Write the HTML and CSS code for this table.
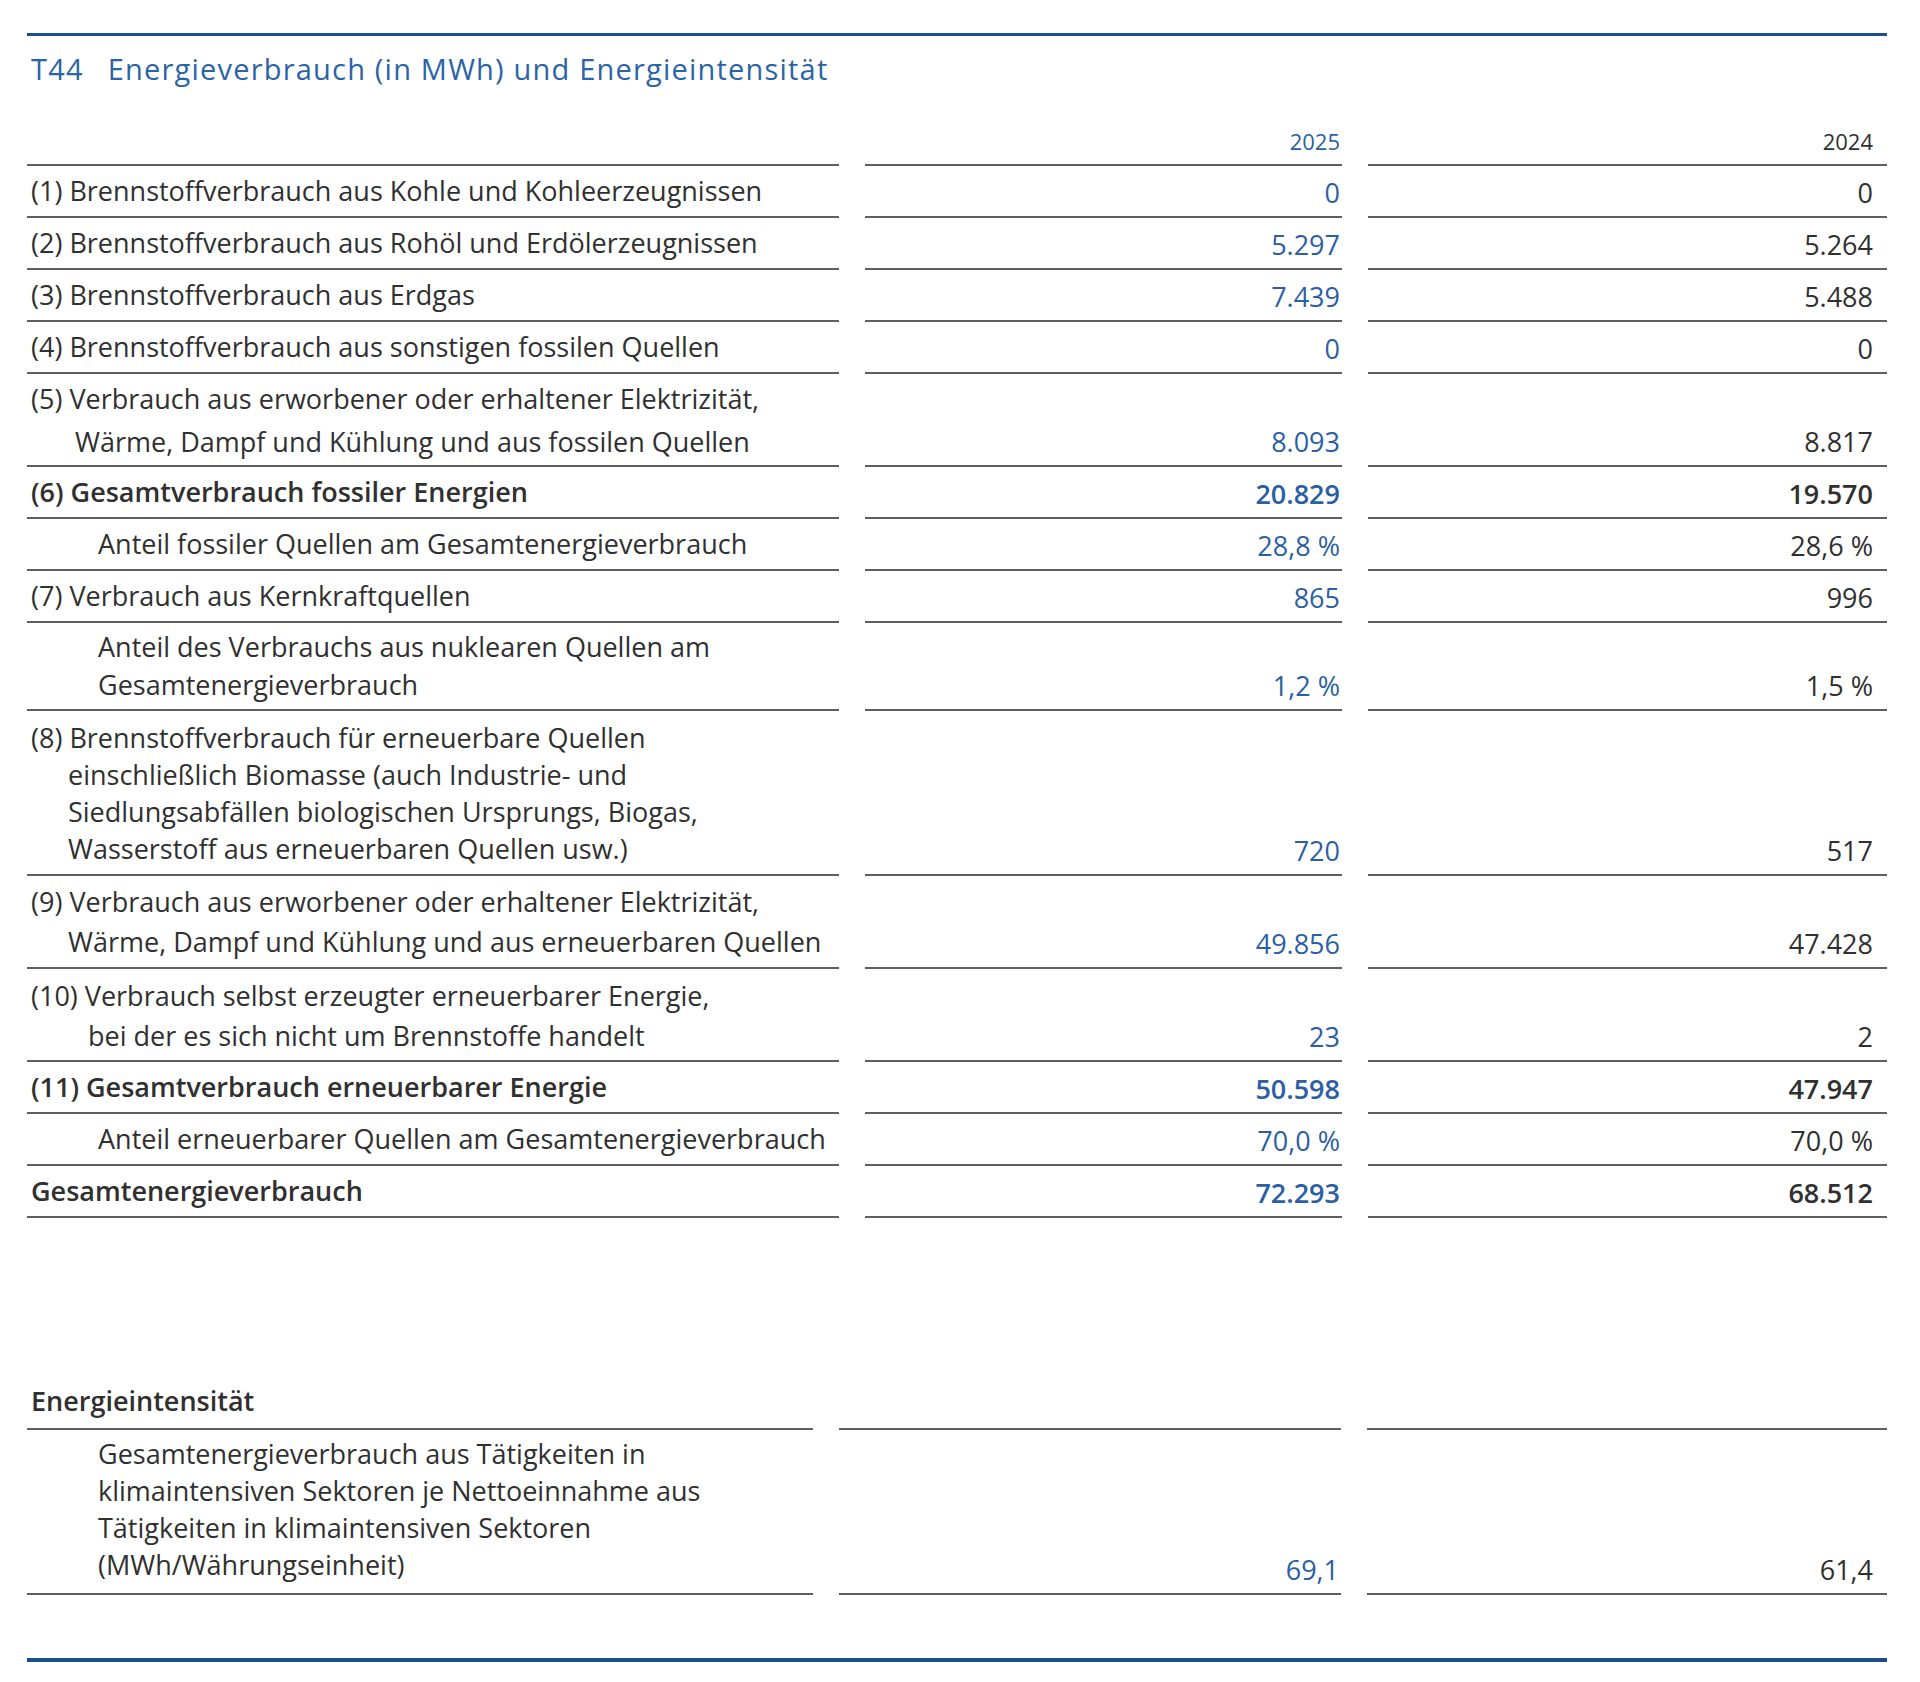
FILE: index.html
```html
<!DOCTYPE html>
<html lang="de">
<head>
<meta charset="utf-8">
<title>T44 Energieverbrauch</title>
<link rel="stylesheet" href="styles.css">
</head>
<body>
<div class="page">
  <div class="rule-top"></div>
  <h1 class="title"><span class="tnum">T44</span>Energieverbrauch (in MWh) und Energieintensität</h1>

  <div class="tbl">
    <div class="row head"><div class="lab"></div><div class="val c2">2025</div><div class="val c3">2024</div></div>
    <div class="row"><div class="lab">(1) Brennstoffverbrauch aus Kohle und Kohleerzeugnissen</div><div class="val c2">0</div><div class="val c3">0</div></div>
    <div class="row"><div class="lab">(2) Brennstoffverbrauch aus Rohöl und Erdölerzeugnissen</div><div class="val c2">5.297</div><div class="val c3">5.264</div></div>
    <div class="row"><div class="lab">(3) Brennstoffverbrauch aus Erdgas</div><div class="val c2">7.439</div><div class="val c3">5.488</div></div>
    <div class="row"><div class="lab">(4) Brennstoffverbrauch aus sonstigen fossilen Quellen</div><div class="val c2">0</div><div class="val c3">0</div></div>
    <div class="row"><div class="lab hang-a r5">(5) Verbrauch aus erworbener oder erhaltener Elektrizität,<br>Wärme, Dampf und Kühlung und aus fossilen Quellen</div><div class="val c2">8.093</div><div class="val c3">8.817</div></div>
    <div class="row strong"><div class="lab">(6) Gesamtverbrauch fossiler Energien</div><div class="val c2">20.829</div><div class="val c3">19.570</div></div>
    <div class="row"><div class="lab sub">Anteil fossiler Quellen am Gesamtenergieverbrauch</div><div class="val c2">28,8 %</div><div class="val c3">28,6 %</div></div>
    <div class="row"><div class="lab">(7) Verbrauch aus Kernkraftquellen</div><div class="val c2">865</div><div class="val c3">996</div></div>
    <div class="row"><div class="lab sub rn">Anteil des Verbrauchs aus nuklearen Quellen am<br>Gesamtenergieverbrauch</div><div class="val c2">1,2 %</div><div class="val c3">1,5 %</div></div>
    <div class="row"><div class="lab hang-b r8">(8) Brennstoffverbrauch für erneuerbare Quellen<br>einschließlich Biomasse (auch Industrie- und<br>Siedlungsabfällen biologischen Ursprungs, Biogas,<br>Wasserstoff aus erneuerbaren Quellen usw.)</div><div class="val c2">720</div><div class="val c3">517</div></div>
    <div class="row"><div class="lab hang-b r9">(9) Verbrauch aus erworbener oder erhaltener Elektrizität,<br>Wärme, Dampf und Kühlung und aus erneuerbaren Quellen</div><div class="val c2">49.856</div><div class="val c3">47.428</div></div>
    <div class="row"><div class="lab hang-c r10">(10) Verbrauch selbst erzeugter erneuerbarer Energie,<br>bei der es sich nicht um Brennstoffe handelt</div><div class="val c2">23</div><div class="val c3">2</div></div>
    <div class="row strong"><div class="lab">(11) Gesamtverbrauch erneuerbarer Energie</div><div class="val c2">50.598</div><div class="val c3">47.947</div></div>
    <div class="row"><div class="lab sub">Anteil erneuerbarer Quellen am Gesamtenergieverbrauch</div><div class="val c2">70,0 %</div><div class="val c3">70,0 %</div></div>
    <div class="row strong"><div class="lab">Gesamtenergieverbrauch</div><div class="val c2">72.293</div><div class="val c3">68.512</div></div>
  </div>

  <div class="tbl tbl2">
    <div class="row strong"><div class="lab ih">Energieintensität</div><div class="val c2"></div><div class="val c3"></div></div>
    <div class="row"><div class="lab sub ri">Gesamtenergieverbrauch aus Tätigkeiten in<br>klimaintensiven Sektoren je Nettoeinnahme aus<br>Tätigkeiten in klimaintensiven Sektoren<br>(MWh/Währungseinheit)</div><div class="val c2">69,1</div><div class="val c3">61,4</div></div>
  </div>

  <div class="rule-bottom"></div>
</div>
</body>
</html>
```

FILE: styles.css
```css
html, body {
  margin: 0;
  padding: 0;
  background: #ffffff;
}

body {
  font-family: "Open Sans", "Noto Sans", "Liberation Sans", sans-serif;
  color: #303030;
}

.page {
  width: 1860px;
  padding: 33px 0 0 27px;
}

.rule-top {
  border-top: 3px solid #1c4d8c;
}

.title {
  margin: 14px 0 0 0;
  font-weight: 400;
  font-size: 29px;
  line-height: 37px;
  letter-spacing: 1.2px;
  color: #2a64a6;
  padding-left: 4px;
}

.tnum {
  display: inline-block;
  margin-right: 24px;
}

.tbl {
  margin-top: 39px;
}

.row {
  display: grid;
  grid-template-columns: 812px 477px 519px;
  column-gap: 26px;
}

.row > div {
  border-bottom: 2px solid #5f5f5f;
}

.lab {
  font-size: 27px;
  line-height: 37px;
  padding: 6px 0 7px 4px;
}

.val {
  display: flex;
  justify-content: flex-end;
  align-items: flex-end;
  font-size: 27px;
  line-height: 30px;
  padding-bottom: 8px;
}

.c2 {
  color: #2b5fa3;
  padding-right: 2px;
}

.c3 {
  color: #303030;
  padding-right: 14px;
}

.head .val {
  font-size: 22px;
  padding-bottom: 8px;
}

.head .lab {
  padding: 0;
}

.strong .lab,
.strong .val {
  font-weight: 600;
}

.sub {
  padding-left: 71px;
}

.hang-a {
  padding-left: 48px;
  text-indent: -44px;
}

.hang-b {
  padding-left: 41px;
  text-indent: -37px;
}

.hang-c {
  padding-left: 61px;
  text-indent: -57px;
}

.r5 {
  line-height: 43px;
  padding-top: 3px;
  padding-bottom: 2px;
}

.rn {
  line-height: 38px;
  padding-top: 5px;
  padding-bottom: 5px;
}

.r8 {
  line-height: 37px;
  padding-top: 8px;
  padding-bottom: 7px;
}

.r9 {
  line-height: 40px;
  padding-top: 6px;
  padding-bottom: 5px;
}

.r10 {
  line-height: 40px;
  padding-top: 7px;
  padding-bottom: 4px;
}

.tbl2 {
  margin-top: 160px;
}

.tbl2 .row {
  grid-template-columns: 786px 502px 520px;
}

.ih {
  padding-top: 4px;
  padding-bottom: 9px;
}

.ri {
  line-height: 37px;
  padding-top: 5px;
  padding-bottom: 10px;
}

.rule-bottom {
  margin-top: 63px;
  border-top: 4px solid #1c4d8c;
}
```
